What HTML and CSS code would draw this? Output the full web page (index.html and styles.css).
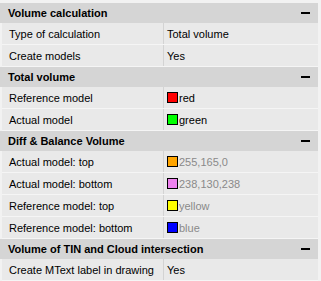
FILE: index.html
```html
<!DOCTYPE html>
<html lang="en">

<head>
    <meta charset="UTF-8">
    <title>Volume properties</title>
    <link rel="stylesheet" href="styles.css">
</head>

<body>
    <div class="grid">
        <div class="cat"><span>Volume calculation</span><span class="toggle"></span></div>
        <div class="prop"><div class="name">Type of calculation</div><div class="value">Total volume</div></div>
        <div class="prop"><div class="name">Create models</div><div class="value">Yes</div></div>

        <div class="cat"><span>Total volume</span><span class="toggle"></span></div>
        <div class="prop"><div class="name">Reference model</div><div class="value"><i class="swatch red"></i>red</div></div>
        <div class="prop"><div class="name">Actual model</div><div class="value"><i class="swatch green"></i>green</div></div>

        <div class="cat"><span>Diff &amp; Balance Volume</span><span class="toggle"></span></div>
        <div class="prop"><div class="name">Actual model: top</div><div class="value dim"><i class="swatch orange"></i>255,165,0</div></div>
        <div class="prop"><div class="name">Actual model: bottom</div><div class="value dim"><i class="swatch violet"></i>238,130,238</div></div>
        <div class="prop"><div class="name">Reference model: top</div><div class="value dim"><i class="swatch yellow"></i>yellow</div></div>
        <div class="prop"><div class="name">Reference model: bottom</div><div class="value dim"><i class="swatch blue"></i>blue</div></div>

        <div class="cat"><span>Volume of TIN and Cloud intersection</span><span class="toggle"></span></div>
        <div class="prop"><div class="name">Create MText label in drawing</div><div class="value">Yes</div></div>
    </div>
</body>

</html>
```

FILE: styles.css
```css
/* Property grid */
body {
    margin: 0;
    background-color: #f2f2f2;
    font-family: "Liberation Sans", Arial, sans-serif;
    font-size: 11px;
    color: #000;
}

.grid {
    padding-top: 3px;
    width: 318px;
}

.cat {
    display: flex;
    align-items: center;
    justify-content: space-between;
    height: 20px;
    padding-left: 8px;
    background-color: #d5d5d5;
    font-weight: bold;
    white-space: nowrap;
}

.toggle {
    width: 9px;
    height: 2px;
    margin-right: 8px;
    background-color: #000;
}

.prop {
    display: grid;
    grid-template-columns: 162px 1fr;
    height: 21px;
    margin-left: 2px;
    background-color: #e9e9e9;
    border-bottom: 1px solid #f5f5f5;
}

.name,
.value {
    display: flex;
    align-items: center;
    white-space: nowrap;
}

.name {
    padding-left: 7px;
    border-right: 1px solid #d3d3d3;
}

.value {
    padding-left: 3px;
}

.dim {
    color: #8a8a8a;
}

.swatch {
    display: inline-block;
    width: 9px;
    height: 9px;
    margin-right: 1px;
    border: 1px solid #000;
}

.red { background-color: #ff0000; }
.green { background-color: #00ff00; }
.orange { background-color: #ffa500; }
.violet { background-color: #ee82ee; }
.yellow { background-color: #ffff00; }
.blue { background-color: #0000ff; }
```
